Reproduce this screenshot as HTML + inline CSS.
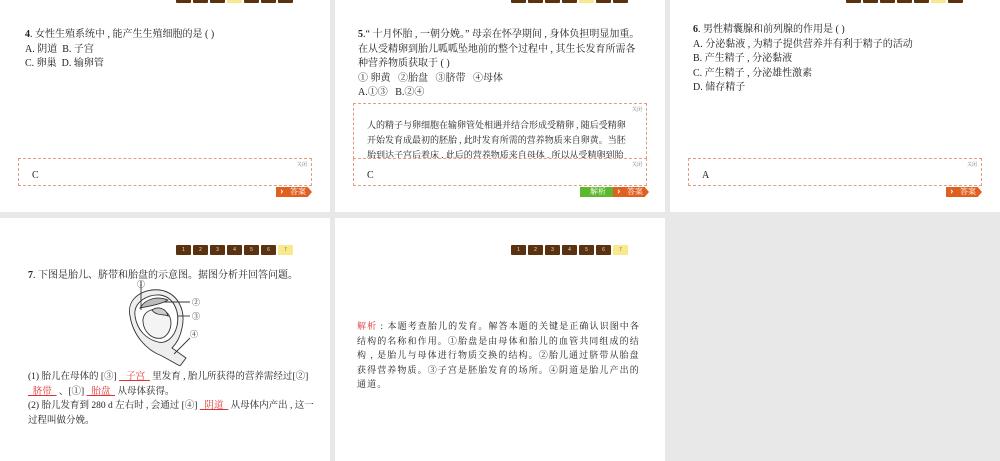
<!DOCTYPE html>
<html><head><meta charset="utf-8"><style>
*{margin:0;padding:0;box-sizing:border-box}
body{width:1000px;height:461px;background:#e8e8e8;position:relative;overflow:hidden;font-family:"Liberation Serif","Noto Serif CJK SC",serif;color:#222}
.p{position:absolute;background:#fff;overflow:hidden}
.tabs{position:absolute;display:flex;gap:2px}
.tabs span{width:15px;height:10px;background:#5a3210;border-radius:1px;color:#ddd;font-size:5px;text-align:center;line-height:10px;font-family:"Liberation Sans",sans-serif}
.tabs span.a{background:#f7e98c;color:#777}
.t{position:absolute;font-size:10px;line-height:14.5px}
.box{position:absolute;border:1px dashed #e0a080;background:#fff}
.close{position:absolute;right:4px;top:2px;font-size:5px;color:#777}
.ans{position:absolute;height:10px;font-size:8px;color:#fff;line-height:10px;padding-left:14px;width:36px;background:#e06020;clip-path:polygon(0 0,88% 0,100% 50%,88% 100%,0 100%)}
.ans:before{content:"›";position:absolute;left:4px;top:-1px;font-weight:bold;font-size:11px}
.jx{position:absolute;height:10px;width:36px;background:#5cb82c;color:#fff;font-size:8px;line-height:10px;text-align:center}
.u{color:#d33;text-decoration:underline;text-decoration-color:#d33}
</style></head><body>
<div class="p" style="left:0;top:0;width:330px;height:212px">
<div class="tabs" style="left:176px;top:-7px"><span></span><span></span><span></span><span class="a"></span><span></span><span></span><span></span></div>
<div class="t" style="left:25px;top:28px"><b>4</b>. 女性生殖系统中 , 能产生生殖细胞的是 ( )<br>A. 阴道&nbsp; B. 子宫<br>C. 卵巢&nbsp; D. 输卵管</div>
<div class="box" style="left:18px;top:158px;width:294px;height:28px"><span class="close">关闭</span><span style="position:absolute;left:13px;top:11px;font-size:10px">C</span></div>
<div class="ans" style="left:276px;top:187px">答案</div>
</div>
<div class="p" style="left:335px;top:0;width:330px;height:212px">
<div class="tabs" style="left:176px;top:-7px"><span></span><span></span><span></span><span></span><span class="a"></span><span></span><span></span></div>
<div class="t" style="left:23px;top:28px;width:286px"><b>5</b>.“ 十月怀胎 , 一朝分娩。” 母亲在怀孕期间 , 身体负担明显加重。在从受精卵到胎儿呱呱坠地前的整个过程中 , 其生长发育所需各种营养物质获取于 ( )<br>① 卵黄&nbsp;&nbsp; ②胎盘&nbsp;&nbsp; ③脐带&nbsp;&nbsp; ④母体<br>A.①③&nbsp;&nbsp; B.②④</div>
<div class="box" style="left:18px;top:103px;width:294px;height:56px;border-bottom:none"><span class="close">关闭</span><div style="position:absolute;left:13px;top:14px;font-size:9px;line-height:15px;width:266px">人的精子与卵细胞在输卵管处相遇并结合形成受精卵 , 随后受精卵开始发育成最初的胚胎 , 此时发育所需的营养物质来自卵黄。当胚胎到达子宫后着床 , 此后的营养物质来自母体 , 所以从受精卵到胎</div></div>
<div class="box" style="left:18px;top:158px;width:294px;height:28px"><span class="close">关闭</span><span style="position:absolute;left:13px;top:11px;font-size:10px">C</span></div>
<div class="jx" style="left:245px;top:187px">解析</div>
<div class="ans" style="left:278px;top:187px">答案</div>
</div>
<div class="p" style="left:670px;top:0;width:330px;height:212px">
<div class="tabs" style="left:176px;top:-7px"><span></span><span></span><span></span><span></span><span></span><span class="a"></span><span></span></div>
<div class="t" style="left:23px;top:23px"><b>6</b>. 男性精囊腺和前列腺的作用是 ( )<br>A. 分泌黏液 , 为精子提供营养并有利于精子的活动<br>B. 产生精子 , 分泌黏液<br>C. 产生精子 , 分泌雄性激素<br>D. 储存精子</div>
<div class="box" style="left:18px;top:158px;width:294px;height:28px"><span class="close">关闭</span><span style="position:absolute;left:13px;top:11px;font-size:10px">A</span></div>
<div class="ans" style="left:276px;top:187px">答案</div>
</div>
<div class="p" style="left:0;top:218px;width:330px;height:243px">
<div class="tabs" style="left:176px;top:27px"><span>1</span><span>2</span><span>3</span><span>4</span><span>5</span><span>6</span><span class="a">7</span></div>
<div class="t" style="left:28px;top:51px"><b>7</b>. 下图是胎儿、脐带和胎盘的示意图。据图分析并回答问题。</div>
<svg style="position:absolute;left:124px;top:62px" width="86" height="86" viewBox="0 0 86 86">
<g fill="none" stroke="#333" stroke-width="0.9">
<path d="M6 36 C2 18 20 8 36 10 C54 13 62 30 58 48 C56 58 52 64 48 68 L62 78 L56 86 L38 76 C22 70 9 55 6 36Z" fill="#eee"/>
<path d="M11 36 C9 22 24 14 36 15 C50 17 56 32 53 46 C50 58 42 64 34 62 C22 59 13 50 11 36Z" fill="#fff"/>
<path d="M16 28 C22 18 34 16 44 20 C38 24 26 26 16 28Z" fill="#bbb"/>
<path d="M19 42 C18 30 32 26 42 32 C50 38 48 54 38 58 C28 60 20 52 19 42Z" fill="#f4f4f4"/>
<path d="M28 30 C34 26 42 28 44 36 C40 34 32 36 28 30Z" fill="#ccc"/>
<path d="M17 1 L17 30"/><path d="M40 22 L66 22"/><path d="M54 36 L66 36"/><path d="M66 58 L50 74"/>
</g>
<g font-size="8" fill="#222" font-family="Liberation Serif, Noto Serif CJK SC, serif"><text x="13" y="7">①</text><text x="68" y="25">②</text><text x="68" y="39">③</text><text x="66" y="57">④</text></g>
</svg>
<div class="t" style="left:28px;top:152px;font-size:9.5px;line-height:14.5px;width:288px">(1) 胎儿在母体的 [③] <span class="u">&nbsp;&nbsp;&nbsp;子宫&nbsp;&nbsp;</span> 里发育 , 胎儿所获得的营养需经过[②] <span class="u">&nbsp;&nbsp;脐带&nbsp;&nbsp;</span> 、[①] <span class="u">&nbsp;&nbsp;胎盘&nbsp;&nbsp;</span> 从母体获得。<br>(2) 胎儿发育到 280 d 左右时 , 会通过 [④] <span class="u">&nbsp;&nbsp;阴道&nbsp;&nbsp;</span> 从母体内产出 , 这一过程叫做分娩。</div>
</div>
<div class="p" style="left:335px;top:218px;width:330px;height:243px">
<div class="tabs" style="left:176px;top:27px"><span>1</span><span>2</span><span>3</span><span>4</span><span>5</span><span>6</span><span class="a">7</span></div>
<div class="t" style="left:22px;top:101px;font-size:9px;line-height:14.5px;width:288px;letter-spacing:1.1px"><span style="color:#d33">解析</span> : 本题考查胎儿的发育。解答本题的关键是正确认识图中各结构的名称和作用。①胎盘是由母体和胎儿的血管共同组成的结构 , 是胎儿与母体进行物质交换的结构。②胎儿通过脐带从胎盘获得营养物质。③子宫是胚胎发育的场所。④阴道是胎儿产出的通道。</div>
</div>
</body></html>
